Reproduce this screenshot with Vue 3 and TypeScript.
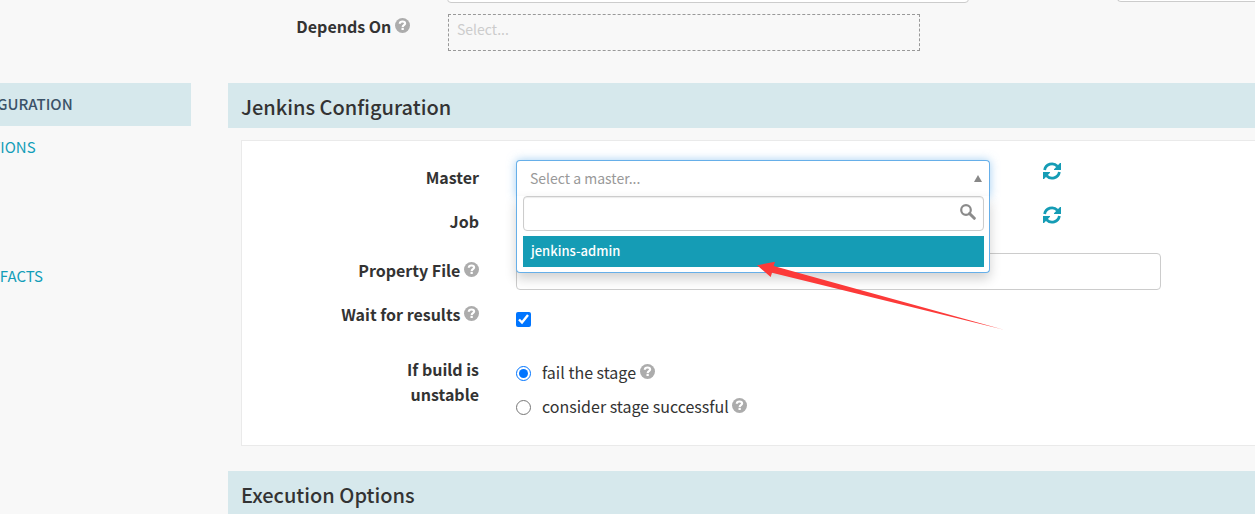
<script setup lang="ts">
import { ref } from 'vue'

interface NavItem {
  label: string
  active: boolean
}

const nav: NavItem[] = [
  { label: 'JENKINS CONFIGURATION', active: true },
  { label: 'EXECUTION OPTIONS', active: false },
  { label: 'NOTIFICATIONS', active: false },
  { label: 'COMMENTS', active: false },
  { label: 'PRODUCES ARTIFACTS', active: false },
]

const masters: string[] = ['jenkins-admin']
const waitForResults = ref(true)
const unstable = ref('fail')
const search = ref('')
const propertyFile = ref('')
</script>

<template>
  <div class="page">
    <svg class="defs" aria-hidden="true">
      <symbol id="help" viewBox="0 0 15 15">
        <circle cx="7.5" cy="7.5" r="7.5" fill="#acacac" />
        <path d="M4.8 5.8C4.9 4.2 6 3.5 7.5 3.5C9.1 3.5 10.1 4.3 10.1 5.5C10.1 7.2 7.7 7.1 7.7 8.9" fill="none" stroke="#fff" stroke-width="2.2" />
        <rect x="6.5" y="9.8" width="2.3" height="2.2" fill="#fff" />
      </symbol>
      <symbol id="refresh" viewBox="0 0 18 18">
        <path d="M1.6 8A7.5 7.5 0 0 1 14.4 4.2M16.4 10A7.5 7.5 0 0 1 3.6 13.8" fill="none" stroke="currentColor" stroke-width="2.8" />
        <path d="M18 1V8H11V7.2L17 1ZM0 17V10H7V10.8L1 17Z" fill="currentColor" />
      </symbol>
    </svg>

    <div class="top">
      <div class="top-fields">
        <input class="text-input name-input" type="text" aria-label="Stage name" />
        <input class="text-input side-input" type="text" aria-label="Stage type" />
      </div>
      <div class="depends">
        <label class="depends-label" for="depends">Depends On <svg class="help"><use href="#help" /></svg></label>
        <input id="depends" class="depends-input" type="text" placeholder="Select..." />
      </div>
    </div>

    <div class="columns">
      <nav class="sidebar">
        <a v-for="item in nav" :key="item.label" href="#" :class="{ active: item.active }">{{ item.label }}</a>
      </nav>

      <main>
        <h2>Jenkins Configuration</h2>
        <section class="card">
          <div class="row">
            <span id="master-label" class="label">Master</span>
            <div class="picker">
              <button class="picker-toggle" type="button" aria-labelledby="master-label" aria-expanded="true">
                <span>Select a master...</span>
                <svg class="caret" viewBox="0 0 8 7"><path d="M4 0L8 7H0Z" fill="#888" /></svg>
              </button>
              <div class="menu">
                <div class="search">
                  <input v-model="search" type="text" aria-label="Search masters" />
                  <svg viewBox="0 0 16 16"><circle cx="6" cy="6" r="4.8" fill="none" stroke="#8b8b8b" stroke-width="2.2" /><path d="M9.5 9.5L14.3 14.3" stroke="#8b8b8b" stroke-width="3" stroke-linecap="round" /></svg>
                </div>
                <button v-for="master in masters" :key="master" class="option" type="button">{{ master }}</button>
              </div>
              <svg class="pointer" viewBox="0 0 246 70" aria-hidden="true">
                <path d="M0 5.3L18 1.7L16.7 6L246 69.5L15 12.7L13.7 17Z" fill="#fc3a39" />
              </svg>
            </div>
            <button class="refresh" type="button" aria-label="Refresh masters"><svg><use href="#refresh" /></svg></button>
          </div>
          <div class="row">
            <span class="label">Job</span>
            <div class="picker"></div>
            <button class="refresh" type="button" aria-label="Refresh jobs"><svg><use href="#refresh" /></svg></button>
          </div>
          <div class="row file-row">
            <label class="label" for="file">Property File <svg class="help"><use href="#help" /></svg></label>
            <input id="file" v-model="propertyFile" class="text-input file-input" type="text" />
          </div>
          <div class="row">
            <label class="label" for="wait">Wait for results <svg class="help"><use href="#help" /></svg></label>
            <input id="wait" v-model="waitForResults" class="wait-box" type="checkbox" />
          </div>
          <div class="row unstable-row">
            <span id="unstable-label" class="label">If build is<br />unstable</span>
            <div class="radios" role="radiogroup" aria-labelledby="unstable-label">
              <label><input v-model="unstable" type="radio" name="unstable" value="fail" /><span>fail the stage <svg class="help"><use href="#help" /></svg></span></label>
              <label><input v-model="unstable" type="radio" name="unstable" value="ok" /><span>consider stage successful <svg class="help"><use href="#help" /></svg></span></label>
            </div>
          </div>
        </section>
        <h2>Execution Options</h2>
      </main>
    </div>
  </div>
</template>

<style>
body {
  margin: 0;
  background: #f8f8f8;
}
</style>

<style scoped>
.page,
.page * {
  box-sizing: border-box;
}
.page {
  height: 100vh;
  overflow: hidden;
  background: #f8f8f8;
  color: #333;
  font: 16px/25px "Noto Sans CJK SC", "Noto Sans", sans-serif;
}
button,
input {
  font: inherit;
  margin: 0;
}
.defs {
  position: absolute;
  width: 0;
  height: 0;
}
.help {
  width: 15px;
  height: 15px;
  vertical-align: 0;
}
.top {
  margin-top: -34px;
  height: 117px;
}
.top-fields {
  display: flex;
  align-items: flex-start;
  gap: 148px;
  padding-left: 447px;
}
.text-input {
  height: 37px;
  padding: 0 12px;
  border: 1px solid #ccc;
  border-radius: 4px;
  background: #fff;
}
.name-input {
  flex: 0 0 522px;
}
.side-input {
  flex: 1;
  height: 36px;
  min-width: 0;
  border-right: 0;
  border-radius: 4px 0 0 4px;
}
.depends {
  display: flex;
  align-items: flex-start;
  margin-top: 11px;
}
.depends-label {
  width: 410px;
  margin-right: 38px;
  text-align: right;
  font-weight: 700;
}
.depends-input {
  width: 472px;
  height: 37px;
  padding: 0 8px 8px;
  border: 1px dashed #999;
  background: transparent;
  font-size: 14px;
}
.depends-input::placeholder {
  color: #ccc;
}
.columns {
  display: grid;
  grid-template-columns: 191px minmax(0, 1fr);
  gap: 37px;
}
.sidebar {
  display: flex;
  flex-direction: column;
  margin-left: -129px;
}
.sidebar a {
  height: 43px;
  padding-left: 15px;
  line-height: 41px;
  color: #139eb8;
  font-size: 15px;
  white-space: nowrap;
  text-decoration: none;
}
.sidebar a.active {
  background: #d6e8ec;
  color: #3b5268;
  font-weight: 500;
}
h2 {
  height: 45px;
  margin: 0;
  padding-left: 13px;
  background: #d6e8ec;
  font-size: 20px;
  font-weight: 500;
  line-height: 47px;
}
.card {
  margin: 12px 0 25px 13px;
  padding: 19px 0 26px;
  border: 1px solid #eaeaea;
  border-right: 0;
  background: #fff;
}
.row {
  display: flex;
  align-items: flex-start;
  min-height: 44px;
}
.label {
  flex: 0 0 237px;
  margin-right: 37px;
  padding-top: 5px;
  text-align: right;
  font-weight: 700;
}
.picker {
  position: relative;
  flex: 0 0 474px;
}
.picker-toggle {
  display: flex;
  align-items: center;
  justify-content: space-between;
  width: 100%;
  height: 37px;
  padding: 0 7px 2px 13px;
  border: 1px solid #66afe9;
  border-bottom: 0;
  border-radius: 4px 4px 0 0;
  background: #fff;
  box-shadow: 0 0 10px rgba(102, 175, 233, 0.6);
  color: #999;
  font-size: 14px;
}
.caret {
  width: 8px;
  height: 7px;
}
.menu {
  position: absolute;
  z-index: 2;
  top: 36px;
  left: 0;
  width: 100%;
  padding: 0 5px 5px 6px;
  border: 1px solid #66afe9;
  border-top: 0;
  border-radius: 0 0 4px 4px;
  background: #fff;
  box-shadow: 0 6px 12px rgba(0, 0, 0, 0.18);
}
.search {
  position: relative;
}
.search input {
  display: block;
  width: 100%;
  height: 35px;
  padding: 0 30px 0 8px;
  border: 1px solid #ccc;
  border-radius: 4px;
  background: #fff;
  box-shadow: inset 0 1px 1px rgba(0, 0, 0, 0.08);
}
.search svg {
  position: absolute;
  top: 8px;
  right: 8px;
  width: 16px;
  height: 16px;
}
.option {
  display: block;
  width: 100%;
  height: 31px;
  margin-top: 5px;
  padding: 0 8px 2px;
  border: 0;
  background: #159cb5;
  color: #fff;
  font-size: 13px;
  font-weight: 500;
  text-align: left;
}
.pointer {
  position: absolute;
  z-index: 3;
  top: 100px;
  left: 241px;
  width: 246px;
  height: 70px;
  pointer-events: none;
}
.refresh {
  margin: 2px 0 0 53px;
  padding: 0;
  border: 0;
  background: none;
  color: #159cb5;
}
.refresh svg {
  display: block;
  width: 18px;
  height: 18px;
}
.file-row {
  margin-top: 5px;
}
.file-input {
  width: 645px;
}
.wait-box,
.radios input {
  width: 15px;
  height: 15px;
}
.wait-box {
  margin-top: 15px;
}
.unstable-row {
  margin-top: 11px;
}
.radios {
  display: flex;
  flex-direction: column;
  gap: 9px;
  padding-top: 8px;
}
.radios label {
  display: flex;
  align-items: center;
  gap: 11px;
}
.radios input {
  margin-top: 2px;
}
</style>
